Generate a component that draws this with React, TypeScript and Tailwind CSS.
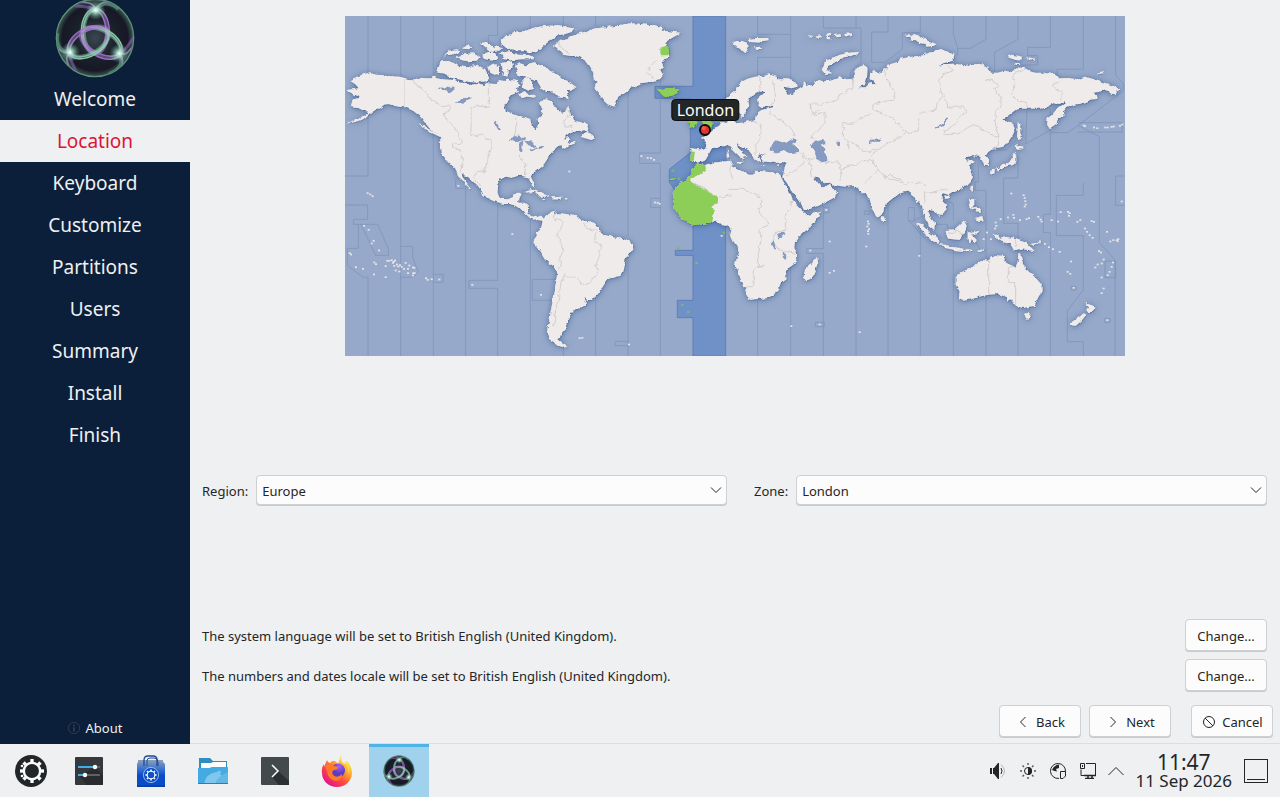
import { useState } from 'react'
import type { ReactNode } from 'react'

const STEPS = ['Welcome', 'Location', 'Keyboard', 'Customize', 'Partitions', 'Users', 'Summary', 'Install', 'Finish']

const LAND = [
  // North America
  'M15 194L32 184L50 177L75 169L90 176L110 177L140 181L165 182L190 189L205 190L222 192L235 186L252 187L265 179L275 187L290 190L330 192L345 200L360 200L372 207L400 204L413 210L425 197L440 203L455 204L462 192L478 195L490 187L500 192L515 195L528 207L512 218L520 228L500 237L490 250L478 270L482 284L500 292L520 300L540 303L556 309L560 330L572 340L580 325L578 308L590 298L592 280L582 262L590 252L605 250L622 257L625 267L634 280L645 282L650 294L660 290L665 272L672 280L678 300L685 297L690 312L700 317L716 322L728 330L726 342L700 345L684 349L665 357L656 368L670 363L674 368L668 382L684 378L690 372L692 382L665 392L652 398L650 388L640 390L626 402L615 412L604 432L598 447L582 460L565 470L556 478L562 492L571 505L569 512L562 508L550 490L545 482L532 480L520 479L500 486L484 482L470 487L461 496L459 512L458 532L463 544L470 548L486 550L500 544L508 532L520 530L527 534L520 548L520 560L534 560L548 564L550 592L558 600L575 604L590 598L600 608L596 616L578 612L566 614L552 604L530 582L512 570L495 564L478 564L460 560L436 550L415 537L410 524L396 506L385 497L370 484L358 478L350 470L352 482L362 496L378 516L378 520L364 508L352 492L340 482L336 468L330 457L305 432L294 422L288 412L285 395L285 377L292 365L280 354L265 347L252 335L240 320L224 300L205 285L180 274L160 272L135 265L120 265L105 276L90 283L78 292L60 308L30 318L5 324L26 312L45 305L66 294L72 287L56 284L35 274L18 270L20 257L28 250L45 244L30 236L8 226L10 222L42 217L30 204Z',
  'M226 318L240 332L262 346L288 356L296 364L284 362L262 352L240 342L228 330Z',
  // Greenland
  'M620 90L636 82L650 72L672 70L680 57L702 52L720 47L750 37L780 34L810 30L840 24L860 22L885 23L910 27L930 28L955 34L950 44L970 46L1010 50L996 58L980 67L968 74L960 85L972 92L965 105L975 120L960 127L950 140L955 152L946 162L955 178L945 190L915 198L890 202L870 210L850 222L830 236L820 242L815 256L808 272L795 268L780 262L768 246L760 232L750 220L748 207L758 198L745 186L745 172L736 152L725 137L705 124L690 120L676 120L655 117L645 106L640 97Z',
  // Ellesmere and Devon
  'M470 72L484 58L500 55L516 46L540 45L570 34L600 30L640 27L695 40L680 48L660 55L640 58L630 65L612 76L600 86L590 96L575 108L552 112L540 106L516 106L500 100L488 103L480 92L468 84Z',
  'M466 112L492 106L520 116L552 118L572 122L568 130L530 130L500 133L476 130Z',
  // Baffin
  'M510 150L525 142L545 148L568 142L600 152L612 164L630 168L648 186L670 196L695 214L676 226L664 222L672 250L655 246L640 244L622 226L604 228L590 220L582 204L566 190L542 182L520 176Z',
  'M532 190L550 184L562 196L560 210L568 218L550 224L534 216Z',
  'M520 232L540 226L552 238L568 236L574 246L548 242L530 246Z',
  // Victoria, Banks and the small arctic islands
  'M277 170L286 136L310 135L328 142L340 150L366 154L394 146L420 158L432 182L424 196L396 200L370 197L340 190L318 186L306 176L290 172Z',
  'M298 118L312 104L336 100L344 108L322 116Z',
  'M334 122L358 114L386 112L404 124L396 134L366 136L342 130Z',
  'M352 98L362 88L382 90L376 100Z',
  'M405 82L424 78L448 96L456 88L474 98L462 104L430 104Z',
  'M412 116L430 108L450 108L458 126L440 134L420 128Z',
  'M430 152L446 142L462 152L462 174L448 176L436 170Z',
  'M468 142L498 136L504 150L488 166L488 182L472 178L476 158Z',
  // Newfoundland and the Caribbean
  'M710 364L728 342L732 350L742 356L750 370L738 372Z',
  'M542 530L556 520L590 530L614 542L586 542L570 528Z',
  'M622 544L650 542L646 552L624 550Z',
  'M660 546L668 547L666 551L660 550Z',
  'M590 548L602 550L596 553Z',
  // South America
  'M593 612L600 600L610 597L618 588L632 584L630 592L648 592L670 595L695 597L704 608L715 614L735 616L750 622L764 640L768 650L780 657L800 662L835 670L850 676L864 684L865 702L852 712L842 727L838 752L835 767L826 780L812 782L792 790L780 797L776 812L765 827L752 842L740 852L728 852L718 846L726 862L722 870L710 877L690 878L684 884L686 892L672 894L676 902L670 917L660 927L664 938L652 952L648 964L640 970L650 978L668 990L652 993L636 988L612 972L606 950L608 932L614 912L616 892L622 860L625 832L633 800L637 770L632 757L618 748L600 732L590 715L580 697L566 682L566 672L575 660L576 648L585 642L590 630Z',
  // Eurasia
  'M1035 397L1050 398L1080 401L1084 388L1078 372L1068 366L1084 358L1098 345L1108 336L1122 330L1130 318L1144 322L1152 312L1160 300L1168 310L1170 322L1190 320L1230 312L1236 298L1240 288L1250 282L1285 274L1284 269L1248 274L1238 262L1237 250L1257 232L1257 224L1244 224L1218 240L1210 254L1213 270L1205 282L1200 296L1190 304L1184 290L1175 280L1160 292L1145 285L1140 250L1155 238L1170 225L1184 206L1190 197L1208 188L1230 182L1250 181L1270 175L1295 182L1298 190L1330 190L1356 202L1358 212L1340 217L1316 212L1320 222L1330 236L1344 237L1348 226L1374 210L1372 196L1382 200L1384 210L1410 206L1408 196L1420 192L1440 196L1465 192L1480 187L1482 180L1505 190L1525 188L1530 175L1528 165L1540 152L1558 148L1568 160L1566 184L1560 206L1540 214L1562 214L1576 200L1596 206L1588 194L1574 190L1575 172L1585 165L1600 172L1618 160L1632 160L1622 148L1640 143L1660 137L1665 128L1700 122L1740 117L1742 110L1766 108L1785 100L1812 108L1828 118L1825 134L1800 140L1778 150L1806 144L1828 143L1850 146L1875 150L1880 145L1905 144L1930 152L1938 170L1958 170L1980 164L2000 168L2015 154L2040 157L2050 162L2070 170L2095 170L2130 174L2140 187L2172 186L2200 190L2220 182L2242 188L2260 194L2290 204L2312 212L2328 220L2312 228L2314 235L2298 233L2290 226L2275 220L2262 228L2245 230L2256 238L2258 248L2236 252L2210 262L2185 268L2165 272L2154 285L2156 298L2138 312L2135 326L2115 340L2106 326L2108 306L2120 298L2135 280L2160 262L2158 254L2145 264L2125 262L2100 276L2080 278L2020 278L1996 296L1972 314L1995 318L2008 322L2012 338L2004 356L1990 378L1972 392L1945 398L1930 408L1922 420L1934 436L1932 450L1918 450L1915 436L1905 430L1908 420L1890 418L1884 424L1888 416L1875 420L1860 426L1866 434L1880 432L1890 438L1872 448L1880 466L1884 484L1872 505L1845 520L1825 526L1810 536L1795 532L1786 538L1792 552L1806 566L1804 582L1782 600L1776 588L1758 583L1748 586L1758 606L1770 622L1768 645L1752 632L1745 612L1735 592L1732 572L1724 556L1714 562L1710 542L1690 527L1672 530L1655 537L1640 550L1620 567L1616 584L1610 596L1598 606L1588 594L1578 570L1568 545L1562 532L1548 532L1530 510L1500 512L1465 507L1455 500L1440 502L1425 490L1412 480L1408 486L1420 502L1430 514L1446 512L1455 502L1460 516L1480 528L1470 544L1440 560L1412 574L1378 582L1368 560L1345 530L1325 500L1312 484L1318 460L1325 440L1310 438L1290 442L1272 438L1255 437L1246 424L1250 416L1270 413L1280 410L1276 400L1290 380L1310 368L1350 366L1390 366L1400 380L1360 408L1320 410L1276 416L1250 414L1238 420L1246 436L1234 436L1224 420L1208 400L1190 390L1176 382L1178 394L1200 416L1204 424L1196 424L1192 438L1186 424L1170 408L1156 394L1140 388L1124 388L1112 394L1100 398L1090 418L1082 432L1060 440L1048 438L1036 432L1038 412Z',
  // Mediterranean islands
  'M1146 402L1151 402L1151 409L1147 410Z',
  'M1145 413L1152 412L1152 424L1146 425Z',
  'M1176 438L1190 438L1187 445L1178 443Z',
  'M1247 447L1262 449L1256 451Z',
  'M1294 447L1303 445L1300 451Z',
  // Africa
  'M1058 444L1080 447L1100 440L1130 437L1155 434L1162 440L1158 452L1176 458L1196 468L1212 476L1224 476L1232 464L1252 466L1270 468L1305 472L1308 484L1320 505L1330 522L1338 545L1352 562L1374 584L1384 598L1404 594L1425 587L1422 600L1412 614L1396 634L1378 648L1362 662L1350 678L1348 696L1356 712L1357 736L1340 750L1322 762L1325 787L1308 800L1302 815L1290 830L1272 845L1250 848L1228 850L1215 852L1206 838L1200 815L1190 798L1180 768L1170 748L1174 730L1182 712L1176 692L1160 668L1154 655L1156 640L1152 628L1138 630L1125 618L1105 617L1084 622L1045 627L1025 618L1008 605L998 588L985 577L988 556L983 532L1000 505L1018 494L1036 476L1045 456Z',
  // Madagascar, Sri Lanka
  'M1416 722L1420 738L1410 765L1400 790L1384 796L1376 785L1378 765L1390 750L1404 742Z',
  'M1612 600L1622 604L1624 614L1614 618L1610 608Z',
  // Indonesia, Borneo, Sulawesi, New Guinea
  'M1715 622L1732 628L1752 648L1772 662L1784 676L1780 684L1764 676L1746 656L1728 640Z',
  'M1780 684L1800 686L1830 694L1858 698L1884 702L1880 706L1840 704L1800 696Z',
  'M1802 642L1828 640L1846 624L1856 614L1866 620L1864 636L1852 660L1840 672L1812 668L1804 656Z',
  'M1868 648L1880 650L1904 644L1900 650L1880 656L1892 668L1890 680L1880 670L1876 684L1868 672Z',
  'M1898 704L1918 698L1912 706L1900 710Z',
  'M1942 656L1958 656L1966 668L1984 662L2010 666L2040 676L2054 690L2070 706L2048 702L2022 700L2006 704L1994 684L1972 678L1956 670Z',
  'M2058 684L2080 680L2086 670L2084 682L2066 690Z',
  // Philippines, Taiwan, Hainan
  'M1874 548L1888 550L1888 566L1882 574L1892 582L1880 580L1874 566Z',
  'M1886 576L1906 576L1908 588L1892 586Z',
  'M1890 606L1912 600L1916 616L1900 618Z',
  'M1876 512L1886 508L1882 526L1876 522Z',
  'M1798 542L1814 538L1810 548L1800 548Z',
  // Japan and Sakhalin
  'M2018 318L2026 326L2026 350L2032 370L2022 372L2016 362L2018 340Z',
  'M2014 384L2036 392L2032 400L2016 402L2012 398Z',
  'M2006 410L2014 416L2014 438L2004 448L1988 450L1972 456L1956 458L1974 444L1992 440L2000 428Z',
  'M1940 458L1950 462L1948 474L1938 470Z',
  'M1954 456L1966 456L1960 464Z',
  // Australia, Tasmania, New Zealand
  'M1832 784L1850 768L1878 758L1892 744L1908 732L1930 734L1938 726L1956 718L1980 720L1978 736L1990 744L2012 752L2018 738L2020 714L2026 716L2034 740L2044 760L2060 774L2078 792L2090 806L2090 826L2078 848L2068 870L2050 872L2038 876L2010 870L1998 850L1988 858L1986 844L1964 834L1932 836L1902 842L1880 850L1856 854L1842 846L1844 826L1832 806Z',
  'M2036 892L2058 892L2054 906L2044 908Z',
  'M2218 852L2230 864L2252 872L2246 882L2232 894L2224 882L2230 872Z',
  'M2216 892L2224 896L2210 914L2192 930L2176 926L2184 914L2204 902Z',
  // Svalbard, Franz Josef Land, Novaya Zemlya, Severnaya Zemlya
  'M1162 78L1190 74L1206 80L1212 92L1202 112L1184 98L1170 90Z',
  'M1208 68L1236 66L1268 66L1272 76L1240 80L1216 78Z',
  'M1230 94L1246 92L1252 98L1234 102Z',
  'M1390 58L1406 60L1404 65L1392 64Z',
  'M1412 62L1426 58L1432 64L1416 67Z',
  'M1442 54L1456 50L1462 56L1446 60Z',
  'M1440 64L1456 62L1460 70L1444 70Z',
  'M1468 58L1486 54L1490 62L1472 64Z',
  'M1498 54L1520 52L1516 62L1500 60Z',
  'M1430 162L1444 134L1480 118L1510 110L1540 108L1534 116L1500 124L1472 138L1450 150L1446 162L1462 172L1440 174Z',
  'M1680 56L1692 54L1700 62L1688 62Z',
  'M1698 60L1712 54L1728 62L1742 72L1748 84L1722 82L1708 72L1694 74Z',
  'M1740 74L1752 78L1778 84L1770 90L1744 92Z',
  'M1986 122L2000 116L2032 122L2028 134L2012 132L2000 128Z',
  'M2006 142L2024 142L2026 147L2010 147Z',
  'M2046 124L2072 128L2068 132L2048 130Z',
  'M2256 170L2276 166L2278 172L2260 174Z',
]

const SELECTED_LAND = [
  'M1000 505L1018 494L1036 476L1045 456L1058 444L1080 447L1086 462L1060 476L1038 488L1040 497L1120 544L1118 562L1098 572L1108 584L1102 617L1084 622L1045 627L1025 618L1008 605L998 588L985 577L988 556L983 532Z',
  'M1038 404L1050 404L1046 434L1035 432L1038 418Z',
  'M936 218L952 220L962 216L990 216L1004 226L990 238L962 242L944 234Z',
  'M946 98L960 94L974 90L974 102L970 118L948 118L946 108Z',
  'M1028 318L1050 308L1056 318L1050 332L1032 336L1036 326Z',
  'M1074 290L1094 306L1104 326L1098 336L1064 342L1076 330L1070 316Z',
  'M974 488L998 486L990 492L974 492Z',
]

const NA_LAKES = [
  'M280 216L300 216L312 212L308 218L328 216L322 222L312 228L300 224Z',
  'M334 258L352 248L384 246L362 256L352 262Z',
  'M448 318L456 320L466 344L460 340Z',
  'M496 370L520 360L542 366L534 372L512 374Z',
  'M524 380L534 376L530 404L524 402Z',
  'M540 376L566 378L572 390L556 392Z',
  'M552 404L576 398L572 404L556 408Z',
  'M574 396L596 390L590 396Z',
]

const ZONE_LINES = [
  'M69 0V480H0M167 0V182M167 275V1020M265 0V180M265 348V1020M362 0V88M458 0V58H430V80M458 560V793H372V817H458V1020M556 0V40M556 604V1020',
  'M655 0V30M655 990V1020M752 0V30M752 622V1020M849 222V662M849 700V1020M849 976H811V989H849M946 190V411H884V442H946V1020',
  'M0 567H68V610H26V625H98L130 698V718H92L48 625M40 625V697H7V748L54 784H69V1020M167 784H203L220 768L203 724V691H167M265 775H294V799H265M332 490V517H358M562 790H636M562 790V853H625',
  'M265 179L280 148L297 112L330 96M532 522H570M532 522V534H545M917 547V574H946M917 547H946M362 470V1020',
  'M1238 0V55H1337M1337 0V188M1238 182V124H1337M1238 850V1020M1337 750V1020M1435 0V36H1548V140L1516 168V185M1533 0V36M1435 570V698H1385V712H1435V1020M1435 574H1452V590H1435M1533 512V1020M1629 0V48H1580V139H1620L1672 100V50H1726V0M1629 560V1020M1726 630V1020',
  'M1558 585H1574V595H1558ZM1690 575H1708V615H1690ZM1411 919H1438V932H1411ZM1692 615L1740 668M1708 612L1735 600',
  'M1825 0V55L1838 95V118M1838 97H1876L1923 70V0M2019 0V70L1949 108V168M2116 0V94H2048V119H2078V147H2030M2215 0V160H2136V180M2312 0V178L2335 202V224L2200 328L2168 350H2116V280M2200 328L2263 362V680L2310 732V1020M2200 320H2332V348H2200',
  'M2116 350V595H2095V650H2116V1020M2046 278L2042 384L2116 342M2019 420V486H1976V622H2019V1020M1900 445V498H1890V523H1923V1020M1825 700V1020M1825 616V562L1800 555M1775 625H1808V640M2215 500V538H2134V659H2215V822L2167 885V977H2215V1020M2340 480H2312V568H2340M2280 735H2312V785H2280Z',
  'M1940 402H1985L2014 372M1768 648L1792 668M1880 655L1905 700M2179 811H2193V822H2179ZM2279 907H2295V919H2279Z',
]

const BORDERS = [
  'M177 184V272M205 192L220 214L240 228L256 250L280 262L282 271H313V290L295 294L300 306L322 326L336 350L350 376L338 385H326V398L352 402V446L345 470',
  'M430 204V271H378V358H414L420 366L438 370L440 398L430 414L428 440L416 468L392 470L386 482L404 510M512 302V368M525 415L535 436L542 450L538 476M666 275L676 300L654 320L660 334L684 330L680 350',
  'M630 590L628 608L650 616L652 636L638 650L640 666L656 702L644 724L646 740L640 760M720 622L718 632L740 642L754 640L758 650M754 650L752 680L766 686L764 726L748 752L762 762L736 800L716 808L706 796L660 776L648 800L644 830L632 880L626 930',
  'M1240 182L1252 200L1240 226M1272 178L1284 194L1292 240L1276 274L1276 290L1340 338L1352 362M1220 318L1248 328L1242 370L1230 392V420',
  'M1524 188L1520 218L1480 240L1480 252L1430 264L1396 264L1396 280L1410 296L1440 288L1440 320L1420 344L1398 358L1404 372M1396 264L1400 296L1424 282M1618 160L1628 196L1650 230L1644 252L1590 262L1584 280L1610 292L1646 308L1672 340L1680 348',
  'M1584 292L1560 300L1520 322L1492 320L1488 332L1500 336L1488 354L1508 374L1540 390L1556 410L1600 400L1632 380L1680 350L1720 344L1724 290L1740 288M1508 374L1512 400M1360 408L1398 432L1420 420M1372 420L1378 440L1340 470L1322 480M1388 430L1400 450L1400 484M1440 440L1480 438L1490 470L1488 496M1490 460L1536 446L1560 430L1590 440L1580 420L1600 400M1590 440L1600 460L1560 500M1600 460L1612 480L1670 498L1682 510L1700 498L1730 502L1740 510M1740 560L1738 530L1770 530L1786 522L1812 518M1612 480L1640 478L1670 494',
  'M1812 145L1824 164L1794 176L1784 196L1788 226L1796 238L1808 262L1806 278L1850 272L1866 284L1848 304L1800 342L1796 356L1840 354L1870 334L1890 326L1930 352L1946 358L1962 362L1960 390L1940 402M1740 288L1772 282L1782 246L1790 238M1924 190L1950 196L1958 206L1946 220L1968 244V260L1950 296L1952 330L1962 362M1930 190L1918 196M2040 160L2012 172L2000 188L2010 210L2000 236L2018 254L2046 260V276M2152 198L2124 202L2122 216L2152 226L2150 250',
  'M1040 497L1120 544L1160 540M1160 440L1154 466L1164 490M1154 520L1200 520L1236 540L1250 542L1250 564L1240 580L1250 600L1272 622L1244 640L1248 668L1240 716L1236 752H1256L1258 752L1230 754L1222 812L1200 812M1340 555L1334 586L1320 600L1326 640L1290 650M1300 700L1320 706L1350 712M1300 700L1282 670L1290 650',
  'M1931 734V836M2012 752H1990V799H2012V866M2012 668V700M1806 652L1840 646L1856 652',
  'M905 172L912 155L936 130M905 172L930 186M640 80L650 96L676 114',
]

const SEAS = [
  // Black Sea, Azov, Caspian, Aral, Balkhash, Baikal, African lakes
  'M1278 402L1282 386L1296 374L1312 376L1324 382L1332 374L1350 368L1354 374L1340 382L1352 392L1362 402L1356 408L1330 410L1312 402L1290 408Z',
  'M1400 386L1412 374L1434 370L1440 380L1424 386L1440 398L1438 410L1444 420L1446 434L1430 438L1416 430L1412 410Z',
  'M1472 382L1484 378L1480 388Z',
  'M1572 380L1580 372L1606 372L1606 376L1582 376Z',
  'M1770 336L1794 322L1806 308L1808 312L1796 330Z',
  'M1300 656L1312 648L1316 656L1308 664L1298 666Z',
  'M1282 672L1286 674L1292 696L1290 700L1282 684Z',
  'M1318 706L1322 712V730L1318 728Z',
]

// x, y pairs of small islands
const ISLETS = [
  [83, 541], [76, 536], [68, 532], [57, 630], [71, 642], [86, 675], [80, 683], [102, 704], [14, 712], [18, 716], [33, 754],
  [54, 759], [88, 740], [93, 745], [87, 776], [122, 784], [122, 751], [127, 735], [133, 735], [140, 733], [146, 738], [150, 734],
  [144, 741], [156, 746], [160, 752], [165, 748], [170, 753], [148, 750], [182, 741], [193, 749], [177, 759], [189, 759], [204, 755],
  [208, 756], [152, 764], [163, 767], [189, 772], [205, 772], [209, 772], [204, 779], [243, 787], [248, 792], [260, 790],
  [283, 791], [382, 807], [502, 655], [588, 837], [340, 510], [889, 421], [908, 426], [918, 427], [927, 432], [673, 467],
  [704, 967], [712, 966], [852, 986], [930, 560], [938, 561], [944, 564], [1130, 660], [1396, 704],
  [1444, 582], [1454, 677], [1564, 692], [1454, 771], [1467, 765], [1339, 931], [1424, 926], [1544, 949], [1723, 720],
  [1569, 617], [1571, 624], [1567, 632], [1572, 640], [1569, 646], [1570, 654], [1999, 533], [2036, 538], [2039, 546],
  [2041, 556], [2042, 566], [2039, 572], [1967, 610], [1989, 605], [2005, 597], [2007, 606], [2025, 613], [2045, 610],
  [2052, 607], [2080, 603], [2087, 611], [2090, 617], [2120, 613], [2139, 617], [2147, 589], [2169, 588], [2174, 592],
  [2172, 600], [2197, 618], [2206, 613], [2240, 616], [2247, 618], [2220, 638], [2226, 648], [2234, 658], [2243, 666],
  [2286, 648], [2296, 677], [2305, 673], [2315, 673], [2320, 670], [2318, 676], [2262, 706], [2268, 710], [2276, 731],
  [2258, 746], [2251, 755], [2270, 743], [2304, 740], [2300, 753], [2294, 768], [2288, 778], [2270, 785], [2276, 818],
  [2270, 832], [2186, 816], [2287, 913], [2330, 557], [2100, 684], [2112, 694], [2124, 700], [2144, 708], [2178, 737],
  [2168, 768], [2176, 774], [2216, 329], [2220, 331], [2247, 335], [2257, 337], [2281, 335], [2288, 335], [2300, 333],
  [2306, 332], [2325, 330], [2332, 326], [1952, 620], [1954, 630], [1950, 638], [1926, 650], [1938, 670], [1916, 670],
]

const SELECTED_ISLETS = [[999, 697], [1055, 741], [1012, 867], [1030, 888], [1136, 650], [984, 464], [1002, 488]]

function WorldMap() {
  return (
    <svg viewBox="0 0 2340 1020" className="block w-full" role="img" aria-label="Time zone map">
      <defs>
        <filter id="coast" x="0" y="0" width="100%" height="100%" colorInterpolationFilters="sRGB">
          <feTurbulence type="fractalNoise" baseFrequency="0.06" numOctaves="3" seed="4" result="noise" />
          <feDisplacementMap in="SourceGraphic" in2="noise" scale="12" xChannelSelector="R" yChannelSelector="G" result="rough" />
          <feDropShadow in="rough" dx="0" dy="2" stdDeviation="9" floodColor="#36558a" floodOpacity="0.7" result="soft" />
          <feDropShadow in="rough" dx="1" dy="1" stdDeviation="2" floodColor="#2f4e80" floodOpacity="0.7" result="edge" />
          <feMerge>
            <feMergeNode in="soft" />
            <feMergeNode in="edge" />
          </feMerge>
        </filter>
        <filter id="rough" x="0" y="0" width="100%" height="100%" colorInterpolationFilters="sRGB">
          <feTurbulence type="fractalNoise" baseFrequency="0.05" numOctaves="2" seed="9" result="noise" />
          <feDisplacementMap in="SourceGraphic" in2="noise" scale="16" xChannelSelector="R" yChannelSelector="G" />
        </filter>
      </defs>
      <rect width="2340" height="1020" fill="#96a9ca" />
      <path d="M1044 0H1142V1020H1044V905H997V853H1044V718H991V703H1044V600L973 498V460L1036 410V247H930V211H1044Z" fill="#6f91c8" stroke="#5f7fb5" strokeWidth="3" />
      <path d="M1080 400L1142 370V440L1060 446Z" fill="#6f91c8" />
      <g fill="none" stroke="#7c90b8" strokeWidth="3" strokeOpacity="0.7">
        {ZONE_LINES.map((d) => <path key={d} d={d} />)}
      </g>
      <g filter="url(#coast)">
        <rect width="2340" height="1020" fill="none" />
        <g fill="#efebea">
          {LAND.map((d) => <path key={d} d={d} />)}
        </g>
        <g fill="#8cce57">
          {SELECTED_LAND.map((d) => <path key={d} d={d} />)}
        </g>
      </g>
      <g filter="url(#rough)">
        <g fill="none" stroke="#d2cecd" strokeWidth="3">
          {BORDERS.map((d) => <path key={d} d={d} />)}
        </g>
        <g fill="#859bc2" stroke="#6f87b2" strokeWidth="2">
          {SEAS.map((d) => <path key={d} d={d} />)}
          {NA_LAKES.map((d) => <path key={d} d={d} />)}
        </g>
      </g>
      {ISLETS.map(([x, y]) => <rect key={`${x}-${y}`} x={x - 3} y={y - 3} width="6" height="5" fill="#e6e4e6" />)}
      {SELECTED_ISLETS.map(([x, y]) => <rect key={`${x}-${y}`} x={x - 4} y={y - 3} width="8" height="6" fill="#7cb76c" />)}
      <circle cx="1080" cy="342" r="15" fill="#e5312f" stroke="#0a0a0a" strokeWidth="6" />
      <circle cx="1076" cy="336" r="6" fill="#ff6a5e" opacity="0.7" />
    </svg>
  )
}

function Orb({ id, className }: { id: string; className: string }) {
  return (
    <svg viewBox="0 0 240 240" className={className} aria-hidden="true">
      <defs>
        <radialGradient id={`${id}-bg`}>
          <stop offset="0" stopColor="#3a4650" />
          <stop offset="0.55" stopColor="#1a2029" />
          <stop offset="0.85" stopColor="#171826" />
          <stop offset="1" stopColor="#3c5a55" />
        </radialGradient>
        <radialGradient id={`${id}-node`}>
          <stop offset="0" stopColor="#fff" />
          <stop offset="0.3" stopColor="#b5f2d6" stopOpacity="0.75" />
          <stop offset="1" stopColor="#4f9b7c" stopOpacity="0" />
        </radialGradient>
        <linearGradient id={`${id}-line`}>
          <stop offset="0" stopColor="#86d3aa" />
          <stop offset="0.5" stopColor="#b4b4cc" />
          <stop offset="1" stopColor="#a06ccc" />
        </linearGradient>
        <clipPath id={`${id}-clip`}>
          <circle cx="120" cy="120" r="114" />
        </clipPath>
      </defs>
      <circle cx="120" cy="120" r="116" fill={`url(#${id}-bg)`} stroke="#5e9276" strokeWidth="4" />
      <g clipPath={`url(#${id}-clip)`}>
        {[0, 120, 240].map((a) => (
          <g key={a} transform={`rotate(${a} 120 122)`} fill="none" stroke={`url(#${id}-line)`}>
            <ellipse cx="121" cy="100" rx="36" ry="66" strokeWidth="14" opacity="0.5" />
            <ellipse cx="121" cy="98" rx="42" ry="66" strokeWidth="4" opacity="0.9" />
            <ellipse cx="119" cy="102" rx="34" ry="64" strokeWidth="4" opacity="0.8" />
            <path d="M122 36C104 22 82 28 52 22" strokeWidth="9" stroke="#8c5fb6" opacity="0.6" />
            <path d="M122 36C140 12 166 12 190 34" strokeWidth="9" stroke="#5fa98a" opacity="0.6" />
            <path d="M70 8C104 20 112 8 122 36C128 18 142 8 170 12" strokeWidth="5" stroke="#b79ad8" opacity="0.7" />
            <circle cx="122" cy="37" r="30" fill={`url(#${id}-node)`} stroke="none" />
          </g>
        ))}
      </g>
    </svg>
  )
}

function Gear({ cx, cy, r, color }: { cx: number; cy: number; r: number; color: string }) {
  return (
    <g stroke={color} fill="none">
      <circle cx={cx} cy={cy} r={r * 0.68} strokeWidth={r * 0.2} />
      {[0, 45, 90, 135, 180, 225, 270, 315].map((a) => (
        <path key={a} d={`M${cx} ${cy - r * 0.72}V${cy - r}`} strokeWidth={r * 0.28} transform={`rotate(${a} ${cx} ${cy})`} />
      ))}
    </g>
  )
}

function LauncherIcon() {
  return (
    <svg viewBox="0 0 32 32" className="size-8" aria-hidden="true">
      <circle cx="16" cy="16" r="16" fill="#232629" />
      <Gear cx={17} cy={16} r={12} color="#fcfcfc" />
      <circle cx="7" cy="11" r="1.3" fill="#fcfcfc" />
      <circle cx="7" cy="21" r="1.3" fill="#fcfcfc" />
    </svg>
  )
}

function SettingsIcon() {
  return (
    <svg viewBox="0 0 32 32" className="size-8" aria-hidden="true">
      <rect x="2" y="2" width="28" height="28" rx="1" fill="#35383d" />
      <path d="M22 12L30 20V30H14L6 21Z" fill="#25272a" opacity="0.7" />
      <path d="M5 12H22M5 20H12" stroke="#3daee9" strokeWidth="2" />
      <path d="M22 12H27M12 20H27" stroke="#5c6166" strokeWidth="2" />
      <circle cx="22" cy="12" r="2.2" fill="#fff" />
      <circle cx="12" cy="20" r="2.2" fill="#fff" />
    </svg>
  )
}

function StoreIcon() {
  return (
    <svg viewBox="0 0 32 32" className="size-8" aria-hidden="true">
      <defs>
        <linearGradient id="bag" x1="0" y1="0" x2="0" y2="1">
          <stop offset="0" stopColor="#8fa0ba" />
          <stop offset="0.4" stopColor="#2e6bd0" />
          <stop offset="0.6" stopColor="#0a4bc6" />
        </linearGradient>
      </defs>
      <path d="M3 5H28V7L30 9V31H2V9L3 7Z" fill="url(#bag)" />
      <path d="M2 30H30V32H2Z" fill="#0a3fae" />
      <path d="M9 11V5Q9 1 13 1H18Q22 1 22 5V11" fill="none" stroke="#1d4a9a" strokeWidth="1.3" />
      <path d="M12 11V6Q12 3 15 3H19Q23 3 23 7V11" fill="none" stroke="#1d4a9a" strokeWidth="1" />
      <circle cx="16" cy="20" r="7.6" fill="#0d50c8" stroke="#b6cdf3" strokeWidth="0.8" />
      <Gear cx={16} cy={20} r={5.6} color="#fff" />
    </svg>
  )
}

function FolderIcon() {
  return (
    <svg viewBox="0 0 32 32" className="size-8" aria-hidden="true">
      <path d="M2 3H13L16 6H30V16H2Z" fill="#2f8dc1" />
      <path d="M4 8H14L16 7H29V14H4Z" fill="#fcfcfc" />
      <path d="M2 13H12L15 12H31V29H1V13Z" fill="#43abe1" />
      <path d="M7 29Q9 18 20 17Q22 15 24 16Q24 18 23 19Q26 21 27 24Q21 23 19 29Z" fill="#7fc7ec" />
      <path d="M18 29Q20 22 31 17V29Z" fill="#62b8e5" />
      <path d="M1 28H31V29H1Z" fill="#2980b9" />
    </svg>
  )
}

function TerminalIcon() {
  return (
    <svg viewBox="0 0 32 32" className="size-8" aria-hidden="true">
      <rect x="2" y="2" width="28" height="28" rx="1" fill="#424a4b" />
      <path d="M19 16L30 26V30H20L13 22Z" fill="#2b3032" />
      <path d="M13 10L19 16L13 22" fill="none" stroke="#fcfcfc" strokeWidth="1.5" />
    </svg>
  )
}

function FirefoxIcon() {
  return (
    <svg viewBox="0 0 32 32" className="size-8" aria-hidden="true">
      <defs>
        <linearGradient id="fox" x1="0.85" y1="0.1" x2="0.2" y2="0.9">
          <stop offset="0" stopColor="#fff44f" />
          <stop offset="0.35" stopColor="#ffa42e" />
          <stop offset="0.65" stopColor="#ff4a3f" />
          <stop offset="1" stopColor="#e31587" />
        </linearGradient>
        <radialGradient id="globe" cx="0.6" cy="0.2">
          <stop offset="0" stopColor="#b45cf0" />
          <stop offset="1" stopColor="#5a3fc0" />
        </radialGradient>
      </defs>
      <path d="M20 0Q18 4 22 8Q26 10 26 6Q31 11 31 18A15 14 0 0 1 1 18Q0 13 3 9V12L6 5Q7 8 9 8Q13 3 17 9Z" fill="url(#fox)" />
      <circle cx="17" cy="15.5" r="7" fill="url(#globe)" />
      <path d="M4 11Q10 7 13 11L17 12Q17 15 13 15Q10 17 12 20Q16 24 21 19Q21 25 15 26Q7 25 6 16Z" fill="#ff7b2a" />
      <path d="M19 3Q28 8 27 19Q30 13 26 7Q20 6 20 0Z" fill="#ffe04a" />
    </svg>
  )
}

function Line({ d, className = 'size-4' }: { d: string; className?: string }) {
  return (
    <svg viewBox="0 0 16 16" className={className} fill="none" stroke="currentColor" aria-hidden="true">
      <path d={d} />
    </svg>
  )
}

const BUTTON =
  'flex h-8 w-[82px] items-center justify-center rounded-[4px] border border-[#cfd0d1] bg-[#fcfcfc] pt-px shadow-[0_1px_0_#c9cacb] hover:border-[#3daee9]'

function Combo({ id, value, options }: { id: string; value: string; options: string[] }) {
  const [current, setCurrent] = useState(value)
  return (
    <div className="grid items-center">
      <select
        id={id}
        value={current}
        onChange={(e) => setCurrent(e.target.value)}
        className="col-start-1 row-start-1 h-[30px] w-full appearance-none rounded-[4px] border border-[#cfd0d1] bg-[#fcfcfc] px-[5px] pt-px shadow-[0_1px_0_#c9cacb]"
      >
        {options.map((option) => <option key={option}>{option}</option>)}
      </select>
      <Line d="M3 5.5L8 10.5L13 5.5" className="pointer-events-none col-start-1 row-start-1 mr-[3px] size-4 justify-self-end" />
    </div>
  )
}

function Task({ label, active, children }: { label: string; active?: boolean; children: ReactNode }) {
  return (
    <button
      aria-label={label}
      className={
        active
          ? 'flex w-[60px] items-center justify-center border-t-3 border-[#4db4ea] bg-[#a0d2ee] pb-[3px]'
          : 'flex w-[60px] items-center justify-center'
      }
    >
      {children}
    </button>
  )
}

function Tray() {
  return (
    <div className="flex items-center gap-[14px]">
      <button aria-label="Volume">
        <svg viewBox="0 0 16 16" className="size-4" aria-hidden="true">
          <path d="M0 5H2V11H0ZM3 5H4L8 0H9V16H8L4 11H3Z" fill="#232629" />
          <path d="M11 5Q13 8 11 11" fill="none" stroke="#232629" />
          <path d="M11 1.5Q18 8 11 14.5" fill="none" stroke="#b4b6b8" />
        </svg>
      </button>
      <button aria-label="Brightness">
        <svg viewBox="0 0 16 16" className="size-4" aria-hidden="true">
          <circle cx="8" cy="8" r="3.5" fill="none" stroke="#232629" />
          <path d="M8 4A4 4 0 0 1 8 12Z" fill="#232629" />
          <path d="M8 0V2M8 14V16M0 8H2M14 8H16M2.5 2.5L4 4M12 12L13.5 13.5M2.5 13.5L4 12M12 4L13.5 2.5" stroke="#54585b" strokeWidth="1.4" />
        </svg>
      </button>
      <button aria-label="Updates">
        <svg viewBox="0 0 16 16" className="size-4" aria-hidden="true">
          <path d="M9 15.4A7.5 7.5 0 1 1 15.4 9" fill="none" stroke="#232629" />
          <path d="M2 7Q4 2 9 1.5L9 5L6 6L7 8.500L4.500 8Z" fill="#232629" />
          <path d="M10.5 8.5H15.5V13L13 15.5H10.5Z" fill="#eff0f1" stroke="#232629" />
        </svg>
      </button>
      <button aria-label="Display">
        <svg viewBox="0 0 16 16" className="size-4" fill="none" stroke="#232629" aria-hidden="true">
          <path d="M6 .5H15.5V12M1 6.5V12.5H16" />
          <path d="M.5 .5H4.5V5.5H.5ZM2.5 2V4" />
          <path d="M4 12.5H16M8 13V15M12 13V15M5 15.5H14" strokeWidth="1.5" />
        </svg>
      </button>
      <button aria-label="Show hidden icons" className="-ml-[2px]">
        <Line d="M.5 12L8 4.5L15.5 12" />
      </button>
    </div>
  )
}

export default function App() {
  const [step, setStep] = useState('Location')

  return (
    <div className="flex min-h-screen flex-col bg-[#eff0f1] font-['Noto_Sans',sans-serif] text-[13px] leading-5 text-[#232629]">
      <div className="flex flex-1">
        {/* Sidebar */}
        <nav className="flex w-[190px] shrink-0 flex-col items-stretch bg-[#0c1f3a] text-[#eff0f1]">
          <div className="flex h-[78px] items-end justify-center overflow-hidden">
            <Orb id="logo" className="size-20 shrink-0" />
          </div>
          {STEPS.map((name) => (
            <button
              key={name}
              onClick={() => setStep(name)}
              className={
                name === step
                  ? 'h-[42px] bg-[#eff0f1] text-[19px] text-[#da1636]'
                  : 'h-[42px] text-[19px]'
              }
            >
              {name}
            </button>
          ))}
          <button className="mt-auto flex h-[34px] items-center justify-center gap-[6px] pt-px">
            <svg viewBox="0 0 16 16" className="size-3 text-[#3a4350]" fill="none" stroke="currentColor" aria-hidden="true">
              <circle cx="8" cy="8" r="7.5" />
              <path d="M8 3.5V5.5M8 7V13" strokeWidth="2" />
            </svg>
            About
          </button>
        </nav>

        {/* Content */}
        <main className="flex min-w-0 flex-1 flex-col border-b border-[#dcdddf] pt-4">
          <div className="relative mx-auto w-full max-w-[780px]">
            <WorldMap />
            <span className="absolute top-[24.5%] left-[46.2%] -translate-x-1/2 rounded-[4px] border border-[#0c0c0c] bg-[#232627] px-1 text-base leading-5 text-[#fcfcfc]">
              London
            </span>
          </div>

          <div className="flex-1" />
          <div className="grid grid-cols-[auto_1fr_auto_1fr] items-center gap-x-2 pt-[5px] pr-[13px] pl-3">
            <label htmlFor="region" className="pt-px">Region:</label>
            <Combo id="region" value="Europe" options={['Africa', 'America', 'Asia', 'Europe', 'Pacific']} />
            <label htmlFor="zone" className="pt-px pl-[19px]">Zone:</label>
            <Combo id="zone" value="London" options={['Lisbon', 'London', 'Madrid', 'Paris']} />
          </div>
          <div className="flex-1" />

          <div className="flex flex-col gap-2 pr-[13px] pl-3">
            <div className="flex items-center justify-between">
              <p className="pt-px">The system language will be set to British English (United Kingdom).</p>
              <button className={BUTTON}>Change...</button>
            </div>
            <div className="flex items-center justify-between">
              <p className="pt-px">The numbers and dates locale will be set to British English (United Kingdom).</p>
              <button className={BUTTON}>Change...</button>
            </div>
          </div>

          <div className="flex justify-end gap-2 pt-[14px] pr-[7px] pb-[6px]">
            <button className={`${BUTTON} gap-[5px]`}>
              <Line d="M10.5 3L5.5 8L10.5 13" />
              Back
            </button>
            <button className={`${BUTTON} gap-[5px]`}>
              <Line d="M5.5 3L10.5 8L5.5 13" />
              Next
            </button>
            <button className={`${BUTTON} ml-3 gap-[5px]`}>
              <Line d="M8 2.5A5.5 5.5 0 1 1 8 13.5A5.5 5.5 0 1 1 8 2.5M4 4L12 12" />
              Cancel
            </button>
          </div>
        </main>
      </div>

      {/* Taskbar */}
      <footer className="flex h-[53px] items-stretch">
        <button aria-label="Application launcher" className="flex w-[59px] items-center justify-center pl-[3px]">
          <LauncherIcon />
        </button>
        <div className="flex gap-[2px]">
          <Task label="System settings"><SettingsIcon /></Task>
          <Task label="Software"><StoreIcon /></Task>
          <Task label="Files"><FolderIcon /></Task>
          <Task label="Terminal"><TerminalIcon /></Task>
          <Task label="Firefox"><FirefoxIcon /></Task>
          <Task label="Installer" active><Orb id="task" className="size-8" /></Task>
        </div>
        <div className="ml-auto flex items-center pr-3">
          <Tray />
          <div className="mr-3 ml-[11px] flex flex-col items-center">
            <time className="text-[21px] leading-5">11:47</time>
            <time className="text-[17px] leading-[18px]">11 Sep 2026</time>
          </div>
          <button aria-label="Show desktop" className="flex size-6 items-end justify-center border border-[#232629] pb-[2px]">
            <span className="h-px w-[18px] bg-[#232629]" />
          </button>
        </div>
      </footer>
    </div>
  )
}
